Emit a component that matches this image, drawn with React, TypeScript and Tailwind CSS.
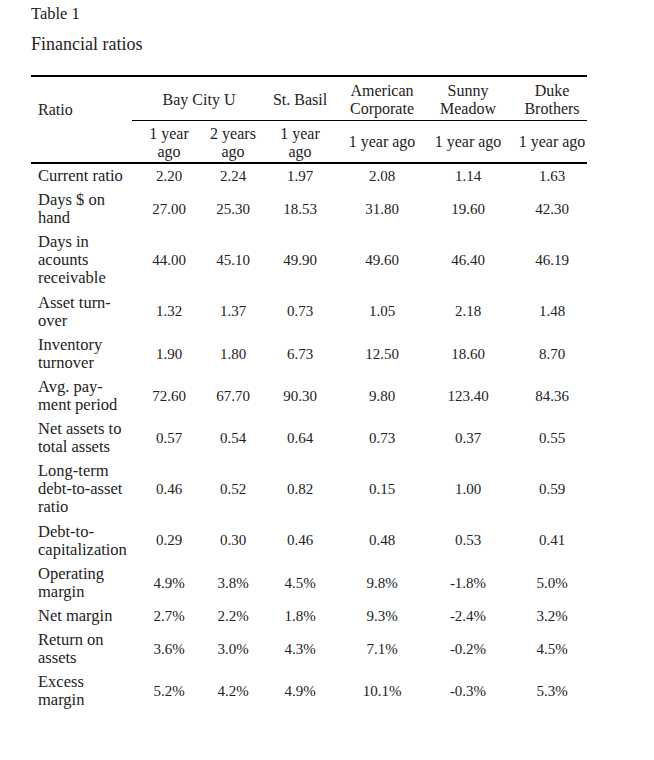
const rows: { label: string[]; values: string[] }[] = [
  { label: ['Current ratio'], values: ['2.20', '2.24', '1.97', '2.08', '1.14', '1.63'] },
  { label: ['Days $ on', 'hand'], values: ['27.00', '25.30', '18.53', '31.80', '19.60', '42.30'] },
  { label: ['Days in', 'acounts', 'receivable'], values: ['44.00', '45.10', '49.90', '49.60', '46.40', '46.19'] },
  { label: ['Asset turn-', 'over'], values: ['1.32', '1.37', '0.73', '1.05', '2.18', '1.48'] },
  { label: ['Inventory', 'turnover'], values: ['1.90', '1.80', '6.73', '12.50', '18.60', '8.70'] },
  { label: ['Avg. pay-', 'ment period'], values: ['72.60', '67.70', '90.30', '9.80', '123.40', '84.36'] },
  { label: ['Net assets to', 'total assets'], values: ['0.57', '0.54', '0.64', '0.73', '0.37', '0.55'] },
  { label: ['Long-term', 'debt-to-asset', 'ratio'], values: ['0.46', '0.52', '0.82', '0.15', '1.00', '0.59'] },
  { label: ['Debt-to-', 'capitalization'], values: ['0.29', '0.30', '0.46', '0.48', '0.53', '0.41'] },
  { label: ['Operating', 'margin'], values: ['4.9%', '3.8%', '4.5%', '9.8%', '-1.8%', '5.0%'] },
  { label: ['Net margin'], values: ['2.7%', '2.2%', '1.8%', '9.3%', '-2.4%', '3.2%'] },
  { label: ['Return on', 'assets'], values: ['3.6%', '3.0%', '4.3%', '7.1%', '-0.2%', '4.5%'] },
  { label: ['Excess', 'margin'], values: ['5.2%', '4.2%', '4.9%', '10.1%', '-0.3%', '5.3%'] },
];

export default function App() {
  return (
    <div className="min-h-[760px] w-[654px] bg-white text-[#222] font-['Liberation_Serif',serif]">
      <div className="pl-[31px] pt-[4px]">
        <p className="text-[16.5px] leading-[20px]">Table 1</p>
        <p className="mt-[10px] text-[18px] leading-[20px]">Financial ratios</p>
      </div>

      <div className="ml-[31px] mt-[21px] w-[556px] border-t-2 border-black">
        {/* header */}
        <div className="grid grid-cols-[101px_74px_54px_80px_84px_88px_75px] text-[16px] leading-[17.5px]">
          <div className="flex h-[44px] items-end pb-[3px] pl-[7px]">Ratio</div>
          <div className="col-span-2 flex h-[44px] items-center justify-center border-b-[1.5px] border-black pl-[6px] pt-[2px]">
            Bay City U
          </div>
          <div className="flex h-[44px] items-center justify-center border-b-[1.5px] border-black pt-[2px]">St. Basil</div>
          <div className="flex h-[44px] items-end justify-center border-b-[1.5px] border-black pb-[3px] text-center">
            American<br />Corporate
          </div>
          <div className="flex h-[44px] items-end justify-center border-b-[1.5px] border-black pb-[3px] text-center">
            Sunny<br />Meadow
          </div>
          <div className="flex h-[44px] items-end justify-center border-b-[1.5px] border-black pb-[3px] pl-[5px] text-center">
            Duke<br />Brothers
          </div>

          <div className="h-[43px] border-b-2 border-black"></div>
          <div className="flex h-[43px] items-end justify-center border-b-2 border-black pb-[1px] text-center leading-[18px]">
            1 year<br />ago
          </div>
          <div className="flex h-[43px] items-end justify-center border-b-2 border-black pb-[1px] text-center leading-[18px] whitespace-nowrap">
            2 years<br />ago
          </div>
          <div className="flex h-[43px] items-end justify-center border-b-2 border-black pb-[1px] text-center leading-[18px]">
            1 year<br />ago
          </div>
          <div className="flex h-[43px] items-center justify-center border-b-2 border-black whitespace-nowrap">1 year ago</div>
          <div className="flex h-[43px] items-center justify-center border-b-2 border-black whitespace-nowrap">1 year ago</div>
          <div className="flex h-[43px] items-center justify-center border-b-2 border-black pl-[5px] whitespace-nowrap">1 year ago</div>
        </div>

        {/* body */}
        {rows.map((row) => (
          <div key={row.label.join(' ')} className="grid grid-cols-[101px_74px_54px_80px_84px_88px_75px]">
            <div className="py-[3.1px] pl-[7px] text-[16.5px] leading-[18px] whitespace-nowrap">
              {row.label.map((line, i) => (
                <div key={i}>{line}</div>
              ))}
            </div>
            {row.values.map((v, i) => (
              <div
                key={i}
                className={
                  i === 5
                    ? 'flex items-center justify-center pl-[5px] text-[15px]'
                    : 'flex items-center justify-center text-[15px]'
                }
              >
                {v}
              </div>
            ))}
          </div>
        ))}
      </div>
    </div>
  );
}
